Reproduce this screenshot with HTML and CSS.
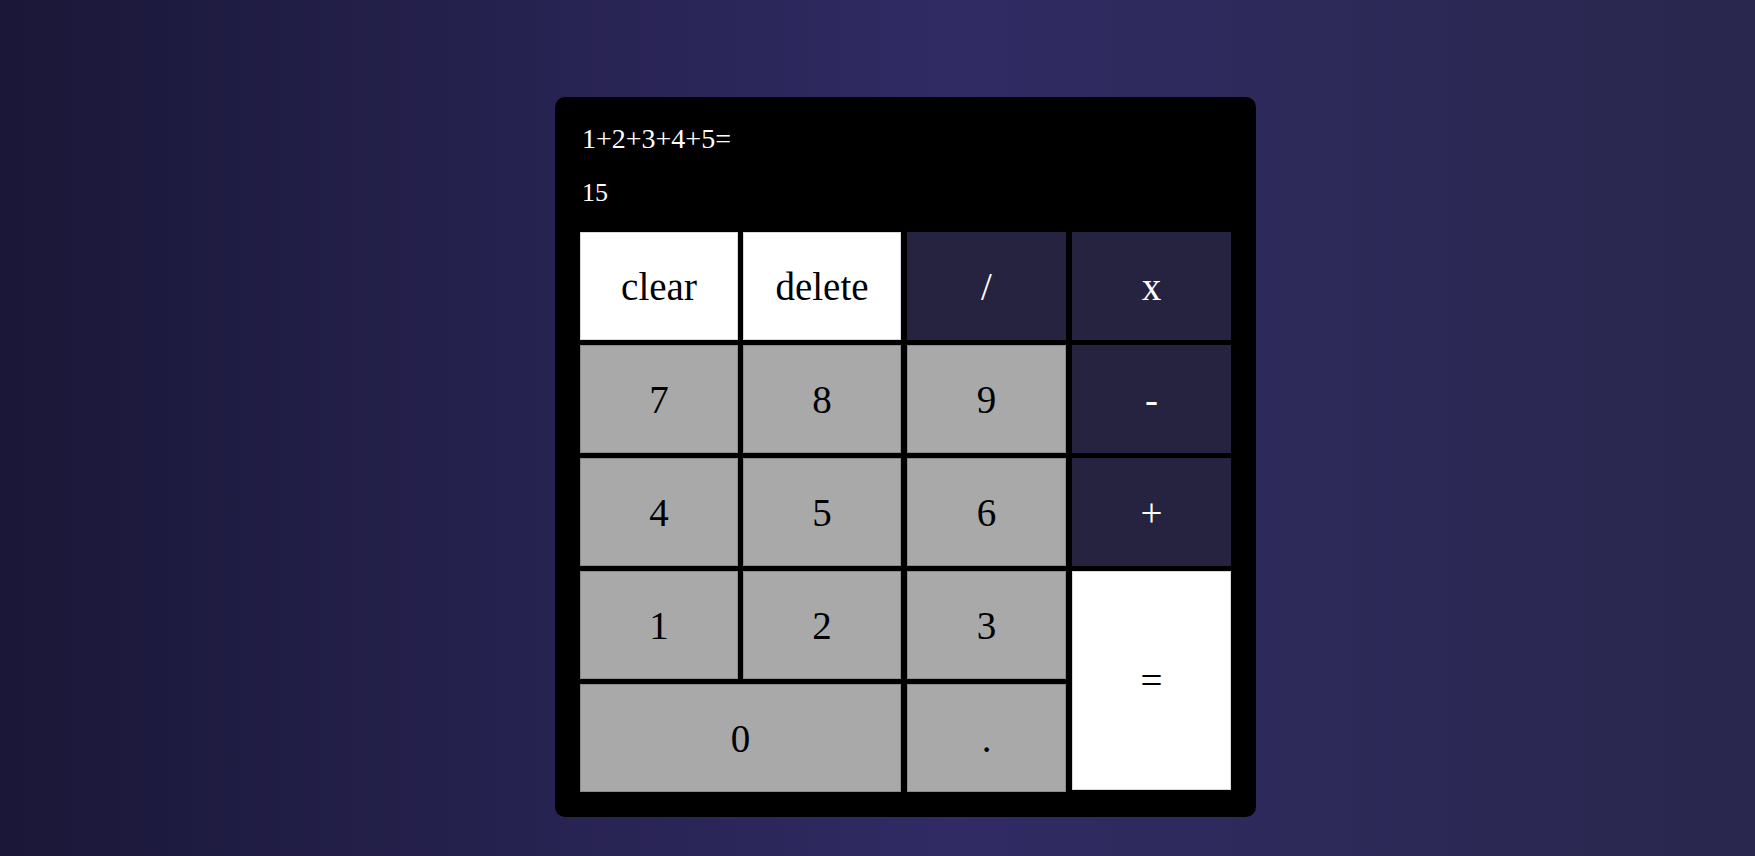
FILE: index.html
```html
<!DOCTYPE html>
<html lang="en">
<head>
<meta charset="utf-8">
<title>Calculator</title>
<link rel="stylesheet" href="styles.css">
</head>
<body>
<div class="calculator">
  <div class="display">
    <div class="previous">1+2+3+4+5=</div>
    <div class="current">15</div>
  </div>
  <div class="keys">
    <button class="key light">clear</button>
    <button class="key light">delete</button>
    <button class="key op">/</button>
    <button class="key op">x</button>
    <button class="key num">7</button>
    <button class="key num">8</button>
    <button class="key num">9</button>
    <button class="key op">-</button>
    <button class="key num">4</button>
    <button class="key num">5</button>
    <button class="key num">6</button>
    <button class="key op">+</button>
    <button class="key num">1</button>
    <button class="key num">2</button>
    <button class="key num">3</button>
    <button class="key light equals">=</button>
    <button class="key num zero">0</button>
    <button class="key num">.</button>
  </div>
</div>
</body>
</html>
```
FILE: styles.css
```css
* { box-sizing: border-box; }
html, body { margin: 0; padding: 0; height: 100%; }
body {
  background: linear-gradient(to right, #1a1738 0%, #302b63 54%, #29274d 100%);
  font-family: "Liberation Serif", "Times New Roman", serif;
  overflow: hidden;
}
.calculator {
  width: 701px;
  margin: 97px 0 0 555px;
  background: #000;
  border-radius: 10px;
  padding: 0 25px 25px 25px;
}
.display {
  height: 135px;
  padding: 27px 0 0 2px;
  display: flex;
  flex-direction: column;
  gap: 24px;
  color: #fff;
}
.previous, .current {
  font-family: "Liberation Serif", "Times New Roman", serif;
  line-height: 30px;
  height: 30px;
}
.previous { font-size: 28px; }
.current { font-size: 26px; }
.keys {
  display: grid;
  grid-template-columns: 158px 163px 165px 165px;
  grid-template-rows: repeat(5, 108px);
  row-gap: 5px;
  column-gap: 0;
}
.key {
  font-family: "Liberation Serif", "Times New Roman", serif;
  font-size: 39px;
  border: 1px solid #8c8c8c;
  padding: 0;
  margin: 0;
  width: 158px;
  justify-self: end;
  cursor: pointer;
}
.key:nth-child(4n+3), .key:nth-child(4n) { width: 159px; }
.light { background: #fff; color: #000; border-color: #d8d8d8; }
.num { background: #a9a9a9; color: #000; border-color: #8c8c8c; }
.op { background: #25233f; color: #fff; border-color: #25233f; }
.equals { grid-row: 4 / span 2; grid-column: 4; margin-bottom: 2px; width: 159px; }
.zero { grid-column: 1 / span 2; width: auto; justify-self: stretch; }
.zero + .key { width: 159px; }
```
